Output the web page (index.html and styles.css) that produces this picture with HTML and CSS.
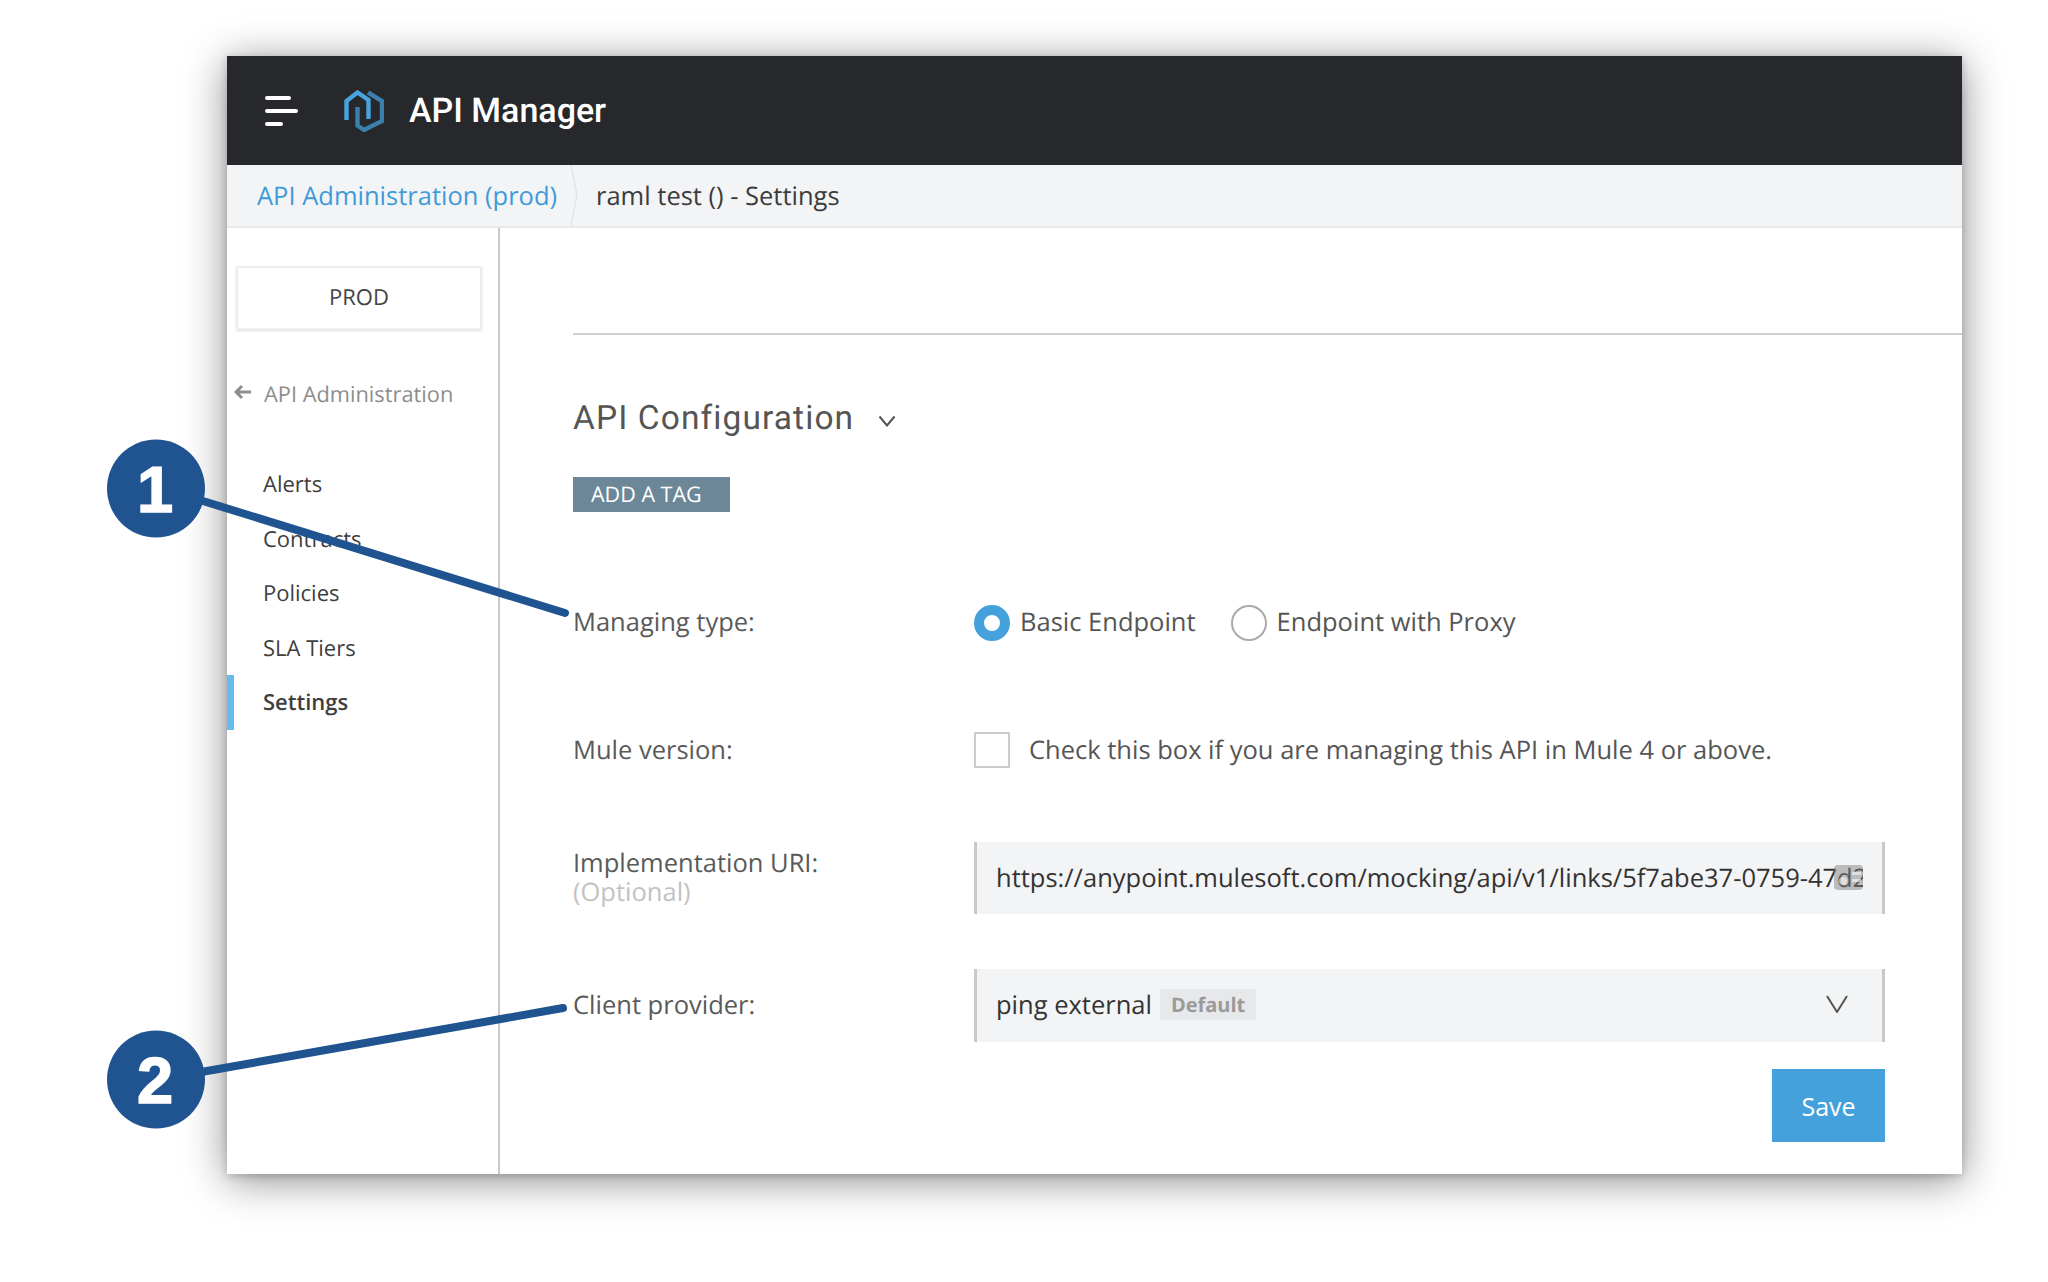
FILE: index.html
```html
<!DOCTYPE html>
<html lang="en">
<head>
<meta charset="utf-8">
<title>API Manager</title>
<link rel="stylesheet" href="styles.css">
</head>
<body>
<div class="window">
  <header class="topbar">
    <div class="burger"><span class="b1"></span><span class="b2"></span><span class="b3"></span></div>
    <svg class="logo" viewBox="0 0 40 42" aria-hidden="true">
      <path class="logo-dark" d="M24 2.500 L38 11 V31 L20 40 L13.500 35.500 V17"/>
      <path class="logo-light" d="M2.500 30 V11 L13.500 2.500 L24.500 10 V29"/>
    </svg>
    <span class="app-name">API Manager</span>
  </header>
  <nav class="crumbs">
    <a class="crumb-link">API Administration (prod)</a>
    <svg class="crumb-sep" viewBox="0 0 8 63" aria-hidden="true"><path d="M1 0 L7 31 L1 63"/></svg>
    <span class="crumb-current">raml test () - Settings</span>
  </nav>
  <div class="body">
    <aside class="side">
      <div class="env">PROD</div>
      <div class="back">
        <svg class="back-arrow" viewBox="0 0 18 16" aria-hidden="true"><path d="M8 2 L2 8 L8 14 M2 8 H17"/></svg>
        <span>API Administration</span>
      </div>
      <ul class="menu">
        <li>Alerts</li>
        <li>Contracts</li>
        <li>Policies</li>
        <li>SLA Tiers</li>
        <li class="active">Settings</li>
      </ul>
    </aside>
    <main class="main">
      <div class="rule"></div>
      <div class="form">
        <div class="title-row">
          <h1 class="title">API Configuration</h1>
          <svg class="title-chev" viewBox="0 0 18 12" aria-hidden="true"><path d="M1.500 1.500 L9 10.500 L16.500 1.500"/></svg>
        </div>
        <div class="tag">ADD A TAG</div>
        <div class="row row-type">
          <label class="lab">Managing type:</label>
          <div class="opts">
            <span class="radio on"></span><span class="opt-a">Basic Endpoint</span>
            <span class="radio"></span><span class="opt-b">Endpoint with Proxy</span>
          </div>
        </div>
        <div class="row row-mule">
          <label class="lab">Mule version:</label>
          <div class="opts">
            <span class="check"></span><span class="check-text">Check this box if you are managing this API in Mule 4 or above.</span>
          </div>
        </div>
        <div class="row row-uri">
          <label class="lab lab-two">Implementation URI:<small>(Optional)</small></label>
          <div class="field">
            <span class="field-text">https://anypoint.mulesoft.com/mocking/api/v1/links/5f7abe37-0759-47d2-8a1c-3f4b</span>
            <svg class="key" viewBox="0 0 29 25" aria-hidden="true">
              <rect class="key-bg" width="29" height="25" rx="4"/>
              <rect class="key-mark" x="18" y="7" width="9" height="3"/>
              <rect class="key-mark" x="18" y="14" width="9" height="3"/>
              <circle class="key-mark" cx="9" cy="16" r="4"/>
            </svg>
          </div>
        </div>
        <div class="row row-client">
          <label class="lab">Client provider:</label>
          <div class="field">
            <span class="field-value">ping external</span>
            <span class="badge">Default</span>
            <svg class="select-chev" viewBox="0 0 22 18" aria-hidden="true"><path d="M1 1 L11 17 L21 1"/></svg>
          </div>
        </div>
        <div class="actions"><button class="save" type="button">Save</button></div>
      </div>
    </main>
  </div>
</div>
<svg class="notes" viewBox="0 0 2048 1282" aria-hidden="true">
  <path class="note-line" d="M190 497 L565 613"/>
  <path class="note-line" d="M190 1074 L563 1008"/>
  <circle class="note-dot" cx="156" cy="488.500" r="49"/>
  <circle class="note-dot" cx="156" cy="1079.500" r="49"/>
  <text class="note-num" x="155" y="512">1</text>
  <text class="note-num" x="155" y="1103">2</text>
</svg>
</body>
</html>
```
FILE: styles.css
```css
* { box-sizing: border-box; }
html, body { margin: 0; background: #fff; }
body {
  position: relative;
  width: 2048px;
  height: 1282px;
  padding: 56px 0 0 227px;
  overflow: hidden;
  font-family: "Open Sans", sans-serif;
  color: #555;
  text-rendering: geometricPrecision;
}
.window {
  width: 1735px;
  height: 1118px;
  background: #fff;
  box-shadow: 0 6px 40px rgba(0, 0, 0, .45), 0 2px 8px rgba(0, 0, 0, .18);
  display: flex;
  flex-direction: column;
}
.topbar {
  height: 109px;
  flex: none;
  background: #27282b;
  display: flex;
  align-items: center;
  padding-left: 38px;
}
.burger { width: 33px; display: flex; flex-direction: column; gap: 9px; }
.burger span { display: block; height: 4px; background: #fff; border-radius: 2px; }
.b1 { width: 26px; }
.b2 { width: 33px; }
.b3 { width: 18px; }
.logo { width: 40px; height: 42px; margin-left: 46px; }
.logo path { fill: none; stroke-width: 4.400; }
.logo-dark { stroke: #3a7fae; }
.logo-light { stroke: #48a3e0; }
.app-name {
  margin-left: 25px;
  color: #fff;
  font-family: Roboto, sans-serif;
  font-weight: 500;
  font-size: 34px;
  letter-spacing: 0;
}
.crumbs {
  height: 63px;
  flex: none;
  background: #f3f4f6;
  border-bottom: 2px solid #e8e9eb;
  display: flex;
  align-items: center;
  padding-left: 30px;
  font-size: 25.500px;
}
.crumb-link { color: #3f9bd8; }
.crumb-sep { width: 8px; height: 61px; margin-left: 13px; flex: none; }
.crumb-sep path { fill: none; stroke: #e2e3e6; stroke-width: 1.500; }
.crumb-current { margin-left: 18px; color: #3b3b3b; }
.body { flex: 1; display: flex; min-height: 0; }
.side {
  width: 273px;
  flex: none;
  border-right: 2px solid #c9c9c9;
  padding-top: 38px;
}
.env {
  width: 246px;
  height: 64px;
  margin-left: 9px;
  border: 2px solid #eee;
  box-shadow: 0 1px 2px rgba(0, 0, 0, .12);
  display: flex;
  align-items: center;
  justify-content: center;
  padding-bottom: 2px;
  font-size: 22px;
  color: #444;
}
.back {
  display: flex;
  align-items: center;
  height: 40px;
  margin-top: 44px;
  padding-left: 7px;
  font-size: 21.800px;
  color: #8d8d8d;
}
.back-arrow { width: 18px; height: 16px; margin-right: 12px; flex: none; position: relative; top: -2px; }
.back-arrow path { fill: none; stroke: #8d8d8d; stroke-width: 3; }
.menu { list-style: none; margin: 43px 0 0; padding: 0; font-size: 22px; color: #3f3f3f; }
.menu li { height: 54.500px; line-height: 54.500px; padding-left: 29px; border-left: 7px solid transparent; }
.menu .active { border-left-color: #65bbe9; font-weight: 600; }
.main { flex: 1; min-width: 0; padding-left: 73px; }
.rule { height: 107px; border-bottom: 2px solid #cfcfcf; }
.form { padding-right: 77px; }
.title-row { display: flex; align-items: center; margin-top: 60px; height: 46px; }
.title {
  margin: 0;
  font-family: Roboto, sans-serif;
  font-weight: 400;
  font-size: 33.500px;
  letter-spacing: 1.100px;
  color: #555;
}
.title-chev { width: 18px; height: 12px; margin-left: 24px; margin-top: 5px; }
.title-chev path { fill: none; stroke: #555; stroke-width: 2; }
.tag {
  width: 157px;
  height: 35px;
  margin-top: 36px;
  padding-left: 18px;
  background: #6c8797;
  color: #fff;
  font-size: 21.500px;
  font-weight: 500;
  line-height: 35px;
}
.row { display: grid; grid-template-columns: 401px 1fr; align-items: center; font-size: 25.500px; }
.row-type { margin-top: 92px; height: 37px; }
.row-mule { margin-top: 91px; height: 36px; }
.row-uri { margin-top: 74px; height: 72px; }
.row-client { margin-top: 55px; height: 73px; }
.lab { color: #5a5a5a; padding-bottom: 2px; }
.row-mule .lab, .lab-two { padding-bottom: 0; }
.lab-two { display: block; line-height: 29px; }
.lab small { display: block; font-size: 25.500px; color: #c2c2c2; }
.opts { display: flex; align-items: center; }
.opt-a, .opt-b { padding-bottom: 2px; }
.radio {
  width: 36px;
  height: 36px;
  flex: none;
  border-radius: 50%;
  border: 2px solid #aaa;
}
.radio.on { border: 10px solid #45a1dc; background: #fff; }
.opt-a { margin-left: 10px; margin-right: 35px; }
.opt-b { margin-left: 10px; }
.check { width: 36px; height: 36px; flex: none; border: 2px solid #ccc; }
.check-text { margin-left: 19px; }
.field {
  position: relative;
  height: 100%;
  background: #f3f4f6;
  border-left: 3px solid #c9c9c9;
  border-right: 3px solid #c9c9c9;
  display: flex;
  align-items: center;
  padding: 0 19px 2px;
  color: #333;
  overflow: hidden;
}
.row-uri .field { padding-bottom: 0; }
.field-text { white-space: nowrap; overflow: hidden; flex: 1; }
.key { position: absolute; right: 19px; top: 23px; width: 29px; height: 25px; }
.key-bg { fill: rgba(130, 130, 130, .5); }
.key-mark { fill: rgba(255, 255, 255, .55); }
.badge {
  margin-left: 8px;
  height: 31px;
  padding: 0 11px;
  border-radius: 3px;
  background: #e7e8ea;
  color: #9a9a9a;
  font-size: 20px;
  font-weight: 700;
  line-height: 31px;
}
.select-chev { width: 22px; height: 18px; margin-left: auto; margin-right: 15px; margin-top: -2px; }
.select-chev path { fill: none; stroke: #555; stroke-width: 2; }
.actions { display: flex; justify-content: flex-end; margin-top: 27px; }
.save {
  width: 113px;
  height: 73px;
  border: 0;
  background: #45a1dc;
  color: #fff;
  font-family: inherit;
  font-size: 25px;
}
.notes { position: absolute; left: 0; top: 0; width: 2048px; height: 1282px; pointer-events: none; }
.note-line { fill: none; stroke: #1f5491; stroke-width: 8; stroke-linecap: round; }
.note-dot { fill: #1f5491; }
.note-num {
  fill: #fff;
  stroke: #fff;
  stroke-width: 1.500;
  font-family: "Liberation Sans", sans-serif;
  font-weight: 700;
  font-size: 65px;
  text-anchor: middle;
}
```
